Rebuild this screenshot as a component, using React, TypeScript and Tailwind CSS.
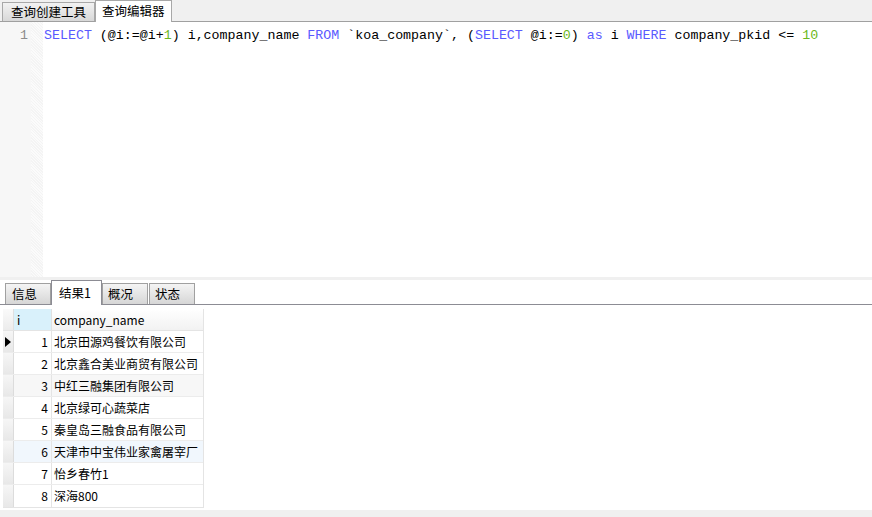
import React from "react";

const rows = [
  "北京田源鸡餐饮有限公司",
  "北京鑫合美业商贸有限公司",
  "中红三融集团有限公司",
  "北京绿可心蔬菜店",
  "秦皇岛三融食品有限公司",
  "天津市中宝伟业家禽屠宰厂",
  "怡乡春竹1",
  "深海800",
];

const K = ({ children }: { children: React.ReactNode }) => (
  <span className="text-[#5a5aff]">{children}</span>
);
const N = ({ children }: { children: React.ReactNode }) => (
  <span className="text-[#6cb820]">{children}</span>
);

export default function App() {
  const ui = { fontFamily: '"Noto Sans CJK SC", "Noto Sans", sans-serif' };
  const mono = { fontFamily: '"Liberation Mono", "Courier New", monospace' };
  return (
    <div className="w-[872px] h-[517px] flex flex-col bg-white overflow-hidden text-black" style={ui}>
      {/* top tabs */}
      <div className="h-[22px] bg-[#f0f0f0] border-b border-[#a0a0a0] flex items-end pl-[2px] shrink-0">
        <div className="h-[19px] px-[8px] flex items-center text-[12.5px] leading-none border border-b-0 border-[#a8a8a8] bg-gradient-to-b from-[#f2f2f2] to-[#d8d8d8]">
          查询创建工具
        </div>
        <div className="h-[22px] -mb-px px-[6px] flex items-center text-[12.5px] leading-none border border-b-0 border-[#a8a8a8] bg-white">
          查询编辑器
        </div>
      </div>
      {/* editor */}
      <div className="h-[255px] flex shrink-0">
        <div className="w-[31px] bg-[#f7f7f7] text-right pr-[3px] pt-[5px] text-[#8c8c8c] text-[13.3px] leading-[17px]" style={mono}>
          1
        </div>
        <div className="w-[12px] bg-[repeating-linear-gradient(45deg,#f4f4f4_0px,#f4f4f4_1px,#fbfbfb_1px,#fbfbfb_2px)]" />
        <div className="flex-1 pl-[1px] pt-[5px] text-[13.3px] leading-[17px] whitespace-pre" style={mono}>
          <K>SELECT</K> (@i:=@i+<N>1</N>) i,company_name <K>FROM</K> `koa_company`, (<K>SELECT</K> @i:=<N>0</N>) <K>as</K> i <K>WHERE</K> company_pkid &lt;= <N>10</N>
        </div>
      </div>
      <div className="h-[3px] bg-[#f0f0f0] shrink-0" />
      {/* bottom tabs */}
      <div className="h-[25px] border-b border-[#8c8c94] flex items-end pl-[5px] shrink-0">
        <div className="h-[21px] w-[46px] pl-[6px] flex items-center text-[12.5px] leading-none border border-b-0 border-[#a0a0a0] bg-gradient-to-b from-[#f4f4f4] to-[#d6d6d6]">
          信息
        </div>
        <div className="h-[25px] -mb-px w-[51px] pl-[7px] flex items-center text-[12.5px] leading-none border border-b-0 border-[#8c8c94] bg-white">
          结果1
        </div>
        <div className="h-[21px] w-[46px] pl-[5px] flex items-center text-[12.5px] leading-none border border-b-0 border-[#a0a0a0] bg-gradient-to-b from-[#f4f4f4] to-[#d6d6d6]">
          概况
        </div>
        <div className="h-[21px] w-[46px] ml-[1px] pl-[5px] flex items-center text-[12.5px] leading-none border border-b-0 border-[#a0a0a0] bg-gradient-to-b from-[#f4f4f4] to-[#d6d6d6]">
          状态
        </div>
      </div>
      {/* grid */}
      <div className="flex-1 pt-[4px] pl-[3px]">
        <div className="w-[201px] border-r border-b border-[#e4e4e4] text-[12px]">
          <div className="flex h-[22px] border-b border-[#e4e4e4]">
            <div className="w-[11px] bg-gradient-to-b from-[#fafafa] to-[#ececec] border-r border-[#e0e0e0]" />
            <div className="w-[38px] bg-[#d9f1fb] pl-[3px] flex items-center border-r border-[#e0e0e0]">i</div>
            <div className="flex-1 bg-gradient-to-b from-white to-[#f2f2f2] pl-[2px] flex items-center">company_name</div>
          </div>
          {rows.map((r, i) => (
            <div
              key={i}
              className={
                "flex h-[22px] border-b border-[#ececec] last:border-b-0 " +
                (i === 2 ? "bg-[#f7f7f7]" : i === 5 ? "bg-[#f1f7fd]" : "bg-white")
              }
            >
              <div className="w-[11px] bg-gradient-to-b from-[#f6f6f6] to-[#e8e8e8] border-r border-[#dcdcdc] flex items-center justify-center">
                {i === 0 && (
                  <svg width="6" height="10" viewBox="0 0 6 10">
                    <path d="M0 0 L6 5 L0 10 Z" fill="#000" />
                  </svg>
                )}
              </div>
              <div className="w-[38px] text-right pr-[3px] flex items-center justify-end border-r border-[#e4e4e4]">{i + 1}</div>
              <div className="flex-1 pl-[2px] flex items-center whitespace-nowrap overflow-hidden">{r}</div>
            </div>
          ))}
        </div>
      </div>
      <div className="h-[7px] bg-[#f0f0f0] shrink-0" />
    </div>
  );
}
